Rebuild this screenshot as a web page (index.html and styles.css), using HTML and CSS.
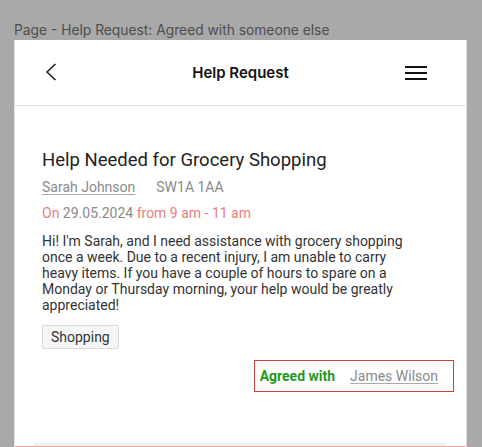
FILE: index.html
```html
<!DOCTYPE html>
<html lang="en">
<head>
<meta charset="utf-8">
<title>Help Request</title>
<link rel="stylesheet" href="styles.css">
</head>
<body>
<div class="page-label">Page - Help Request: Agreed with someone else</div>
<div class="card">
  <header class="topbar">
    <svg class="back" width="12" height="18" viewBox="0 0 12 18" aria-hidden="true">
      <path d="M10.5 1 L2 9 L10.5 17" fill="none" stroke="#222" stroke-width="1.6"/>
    </svg>
    <div class="topbar-title">Help Request</div>
    <svg class="menu" width="22" height="16" viewBox="0 0 22 16" aria-hidden="true">
      <rect x="0" y="1" width="22" height="2" fill="#111"/>
      <rect x="0" y="7" width="22" height="2" fill="#111"/>
      <rect x="0" y="13" width="22" height="2" fill="#111"/>
    </svg>
  </header>
  <main class="content">
    <h1 class="req-title">Help Needed for Grocery Shopping</h1>
    <div class="meta">
      <a class="person">Sarah Johnson</a>
      <span class="postcode">SW1A 1AA</span>
    </div>
    <div class="when"><span class="red">On</span> 29.05.2024 <span class="red">from 9 am - 11 am</span></div>
    <p class="desc">Hi! I'm Sarah, and I need assistance with grocery shopping once a week. Due to a recent injury, I am unable to carry heavy items. If you have a couple of hours to spare on a Monday or Thursday morning, your help would be greatly appreciated!</p>
    <div class="tags"><span class="tag">Shopping</span></div>
    <div class="agreed-row">
      <div class="agreed">
        <span class="agreed-label">Agreed with</span>
        <a class="person">James Wilson</a>
      </div>
    </div>
  </main>
  <div class="footer-peek">
    <div class="peek-bar"></div>
  </div>
  <div class="peek-line"></div>
</div>
</body>
</html>
```

FILE: styles.css
```css
html, body {
  margin: 0;
  padding: 0;
  background: #a9a9a9;
  height: 447px;
  overflow: hidden;
}

.page-label {
  font-family: Inter, "Liberation Sans", sans-serif;
  font-size: 13.8px;
  line-height: 20px;
  color: #4d4d4d;
  padding: 20px 0 0 14px;
  height: 20px;
}

.card {
  margin-left: 14px;
  width: 451px;
  background: #fff;
  border-left: 1px solid #e2e2e2;
  border-right: 1px solid #e2e2e2;
  min-height: 420px;
}

.topbar {
  height: 65px;
  border-bottom: 1px solid #dedede;
  display: grid;
  grid-template-columns: 1fr auto 1fr;
  align-items: center;
  padding: 0 39px 0 30px;
}

.back {
  display: block;
  margin-top: -1px;
}

.topbar-title {
  font-family: Inter, "Liberation Sans", sans-serif;
  font-weight: 600;
  font-size: 15px;
  color: #111;
  margin-top: -1px;
  padding-left: 9px;
}

.menu {
  display: block;
  justify-self: end;
}

.content {
  padding: 42px 28px 0 27px;
  font-family: Roboto, "Liberation Sans", sans-serif;
}

.req-title {
  margin: 0;
  font-size: 18.5px;
  font-weight: 400;
  line-height: 24px;
  color: #222;
}

.meta {
  margin-top: 5px;
  display: flex;
  gap: 21px;
  font-size: 14px;
  line-height: 20px;
  color: #8a8a8a;
}

.person {
  color: #8a8a8a;
  text-decoration: underline;
  text-decoration-color: #aaa;
  text-underline-offset: 2px;
}

.when {
  margin-top: 6px;
  font-size: 14px;
  line-height: 20px;
  color: #8a8a8a;
}

.red {
  color: #ea7e7e;
}

.desc {
  margin: 10px 0 0;
  max-width: 380px;
  font-size: 14px;
  line-height: 16px;
  color: #333;
}

.tags {
  margin-top: 12px;
  display: flex;
}

.tag {
  font-size: 14px;
  line-height: 22px;
  padding: 0 8px;
  color: #333;
  background: #f6f6f6;
  border: 1px solid #d9d9d9;
  border-radius: 2px;
}

.agreed-row {
  display: flex;
  justify-content: flex-end;
  margin-top: 11px;
  margin-right: -16px;
}

.agreed {
  display: flex;
  align-items: center;
  gap: 15px;
  height: 30px;
  padding: 0 15px 0 5px;
  border: 1.5px solid #d63c3c;
  font-size: 14px;
}

.agreed-label {
  color: #1f9a1f;
  font-weight: 700;
}

.footer-peek {
  margin-top: 51px;
  padding: 0 19px;
}

.peek-bar {
  height: 3px;
  background: #f2f2f2;
}

.peek-line {
  height: 1px;
  background: #f0a0a0;
}
```
